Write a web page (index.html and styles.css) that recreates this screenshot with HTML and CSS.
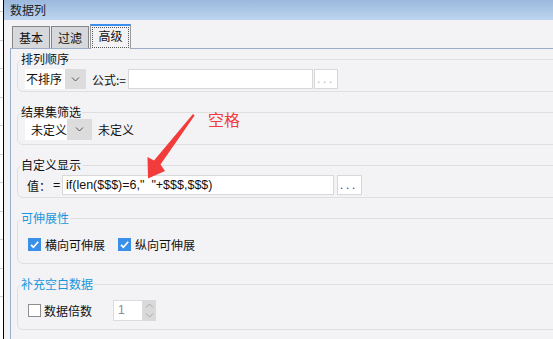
FILE: index.html
```html
<!DOCTYPE html>
<html lang="zh-CN">
<head>
  <meta charset="UTF-8">
  <title>数据列</title>
  <link rel="stylesheet" href="styles.css">
</head>
<body>

  <div class="edge"></div>
  <div class="window">
    <div class="titlebar">数据列</div>

    <div class="tabs">
      <div class="tab">基本</div>
      <div class="tab">过滤</div>
      <div class="tab active"><span class="focus">高级</span></div>
    </div>

    <div class="panel">

      <fieldset class="group g-first">
        <legend>排列顺序</legend>
        <div class="row row-sort">
          <div class="select sel-sort">
            <span class="val">不排序</span>
            <span class="drop"><svg width="9" height="5" viewBox="0 0 9 5"><path d="M1 0.5l3.5 3.5 3.5-3.5" fill="none" stroke="#555" stroke-width="1"/></svg></span>
          </div>
          <span class="lbl-formula">公式:=</span>
          <div class="input in-formula"></div>
          <div class="more">...</div>
        </div>
      </fieldset>

      <fieldset class="group">
        <legend>结果集筛选</legend>
        <div class="row row-filter">
          <div class="select sel-filter">
            <span class="val">未定义</span>
            <span class="drop"><svg width="9" height="5" viewBox="0 0 9 5"><path d="M1 0.5l3.5 3.5 3.5-3.5" fill="none" stroke="#555" stroke-width="1"/></svg></span>
          </div>
          <span class="lbl-after">未定义</span>
        </div>
      </fieldset>

      <fieldset class="group">
        <legend>自定义显示</legend>
        <div class="row row-value">
          <span class="lbl-value">值：</span>
          <span class="eq">=</span>
          <div class="input in-value">if(len($$$)=6,"&nbsp;&nbsp;"+$$$,$$$)</div>
          <div class="more more-dark">...</div>
        </div>
      </fieldset>

      <fieldset class="group">
        <legend class="blue">可伸展性</legend>
        <div class="row row-check">
          <span class="check on"><svg width="13" height="13" viewBox="0 0 13 13"><path d="M3 6.8l2.4 2.4L10.2 3.8" fill="none" stroke="#fff" stroke-width="1.7"/></svg></span>
          <span class="check-lbl">横向可伸展</span>
          <span class="check on second"><svg width="13" height="13" viewBox="0 0 13 13"><path d="M3 6.8l2.4 2.4L10.2 3.8" fill="none" stroke="#fff" stroke-width="1.7"/></svg></span>
          <span class="check-lbl">纵向可伸展</span>
        </div>
      </fieldset>

      <fieldset class="group">
        <legend class="blue">补充空白数据</legend>
        <div class="row row-fill">
          <span class="check"></span>
          <span class="check-lbl lbl-times">数据倍数</span>
          <div class="spinner">
            <span class="spin-val">1</span>
            <span class="spin-btns">
              <svg width="9" height="5" viewBox="0 0 9 5"><path d="M1 4.5l3.5-3.5 3.5 3.5" fill="none" stroke="#a8a8a8" stroke-width="1"/></svg>
              <svg width="9" height="5" viewBox="0 0 9 5"><path d="M1 0.5l3.5 3.5 3.5-3.5" fill="none" stroke="#a8a8a8" stroke-width="1"/></svg>
            </span>
          </div>
        </div>
      </fieldset>

    </div>
  </div>

  <!-- annotation drawn over the dialog -->
  <div class="note">空格</div>
  <svg class="arrow" width="553" height="339" viewBox="0 0 553 339">
    <path d="M193 114 L194.6 115.6 L160.5 164.5 L165 171 L148 178.5 L147.5 157 L154 160.5 Z" fill="#f23b3b"/>
  </svg>

</body>
</html>
```

FILE: styles.css
```css
body {
  margin: 0;
  width: 553px;
  height: 339px;
  overflow: hidden;
  display: flex;
  background-color: #f3f3f5;
  font-family: "Noto Sans CJK SC", "Liberation Sans", sans-serif;
  font-size: 12px;
  color: #111;
}
.edge {
  width: 3px;
  border-right: 1px solid #000;
  background: repeating-linear-gradient(to bottom, #fff 0, #fff 27.5px, #cfcfcf 27.5px, #cfcfcf 28.5px);
  background-position: 0 -16px;
}
.window {
  flex: 1;
  min-width: 0;
  display: flex;
  flex-direction: column;
}
.titlebar {
  height: 20px;
  line-height: 19px;
  padding-left: 6px;
  background: linear-gradient(to bottom, #9bb9dd, #bdd5ef);
  color: #222;
}

/* tabs */
.tabs {
  height: 24px;
  margin-top: 4px;
  padding-left: 8px;
  display: flex;
  align-items: flex-end;
}
.tab {
  box-sizing: border-box;
  width: 38px;
  height: 22px;
  margin-right: 1px;
  border: 1px solid #858585;
  border-bottom: none;
  background: #d6d8dc;
  text-align: center;
  line-height: 22px;
}
.tab.active {
  width: 41px;
  height: 25px;
  margin-right: 0;
  margin-bottom: -1px;
  padding: 1px;
  border-color: #9b9b9b;
  border-top: 2px solid #3d8fef;
  background: #f3f3f5;
  position: relative;
  z-index: 1;
}
.focus {
  display: block;
  box-sizing: border-box;
  height: 100%;
  border: 1px dotted #555;
  line-height: 15px;
}
.panel {
  flex: 1;
  margin-left: 6px;
  padding-left: 6px;
  border-top: 1px solid #9cadca;
  border-left: 1px solid #9cadca;
  overflow: hidden;
}

/* groups */
.group {
  margin: 12px -20px 0 0;
  padding: 0;
  min-inline-size: 0;
  border: 1px solid #dfdfe2;
  border-radius: 6px;
}
.group.g-first {
  margin-top: 2px;
}
legend {
  margin-left: 2px;
  padding: 0 1px;
  line-height: 16px;
  height: 16px;
}
legend.blue {
  color: #1a96dc;
}
.row {
  display: flex;
  align-items: center;
  white-space: nowrap;
}
.row > * {
  flex-shrink: 0;
}
.row-sort {
  height: 20px;
  margin: 2px 0 2px 7px;
}
.row-filter {
  height: 21px;
  margin: -1px 0 4px 7px;
}
.row-value {
  height: 20px;
  margin: 2px 0 2px 9px;
}
.row-check {
  height: 20px;
  margin: 8px 0 9px 10px;
}
.row-fill {
  height: 21px;
  margin: 8px 0 8px 10px;
}

/* combo boxes */
.select {
  display: flex;
  height: 100%;
  background: #fff;
}
.select .val {
  flex-shrink: 0;
  line-height: 20px;
}
.select .drop {
  flex-shrink: 0;
  display: flex;
  align-items: center;
  justify-content: center;
  background: #dcdcdc;
}
.sel-sort .val {
  width: 39px;
  padding-left: 1px;
}
.sel-sort .drop {
  width: 21px;
}
.sel-filter .val {
  width: 36px;
  padding-left: 6px;
  line-height: 22px;
}
.sel-filter .drop {
  width: 25px;
}
.lbl-formula {
  width: 36px;
  margin-left: 6px;
}
.lbl-after {
  margin-left: 6px;
}

/* inputs */
.input {
  box-sizing: border-box;
  height: 100%;
  background: #fff;
  border: 1px solid #d8d8d8;
}
.in-formula {
  width: 185px;
}
.in-value {
  width: 272px;
  padding-left: 3px;
  font-family: "Liberation Sans", sans-serif;
  font-size: 12.5px;
  line-height: 18px;
}
.more {
  box-sizing: border-box;
  width: 24px;
  height: 100%;
  margin-left: 1px;
  padding-left: 2px;
  background: #fff;
  border: 1px solid #d8d8d8;
  font-family: "Liberation Sans", sans-serif;
  font-size: 12px;
  line-height: 18px;
  letter-spacing: 2.7px;
  color: #b4b4b4;
}
.more-dark {
  width: 25px;
  margin-left: 3px;
  color: #5a2a82;
}
.lbl-value {
  width: 24px;
}
.eq {
  width: 7px;
  margin-left: 2px;
  margin-right: 2px;
  font-family: "Liberation Sans", sans-serif;
  font-size: 12.5px;
  text-align: center;
}

/* check boxes */
.check {
  box-sizing: border-box;
  width: 13px;
  height: 13px;
  border: 1px solid #8e8e8e;
  background: #fff;
}
.check.on {
  border: none;
  background: #3a8fe8;
}
.check svg {
  display: block;
}
.check.second {
  margin-left: 13px;
}
.check-lbl {
  margin-left: 4px;
}
.lbl-times {
  margin-left: 3px;
}

/* number spinner */
.spinner {
  display: flex;
  height: 100%;
  margin-left: 21px;
}
.spin-val {
  box-sizing: border-box;
  width: 30px;
  padding-left: 4px;
  background: #fff;
  border: 1px solid #dcdcdc;
  font-family: "Liberation Sans", sans-serif;
  line-height: 19px;
  color: #8a8a9a;
}
.spin-btns {
  width: 13px;
  display: flex;
  flex-direction: column;
  align-items: center;
  justify-content: space-around;
  background: #d9d9d9;
}

/* annotation */
.note {
  position: absolute;
  left: 208px;
  top: 111px;
  font-size: 16px;
  line-height: 16px;
  color: #f03c3c;
}
.arrow {
  position: absolute;
  left: 0;
  top: 0;
  pointer-events: none;
}
```
